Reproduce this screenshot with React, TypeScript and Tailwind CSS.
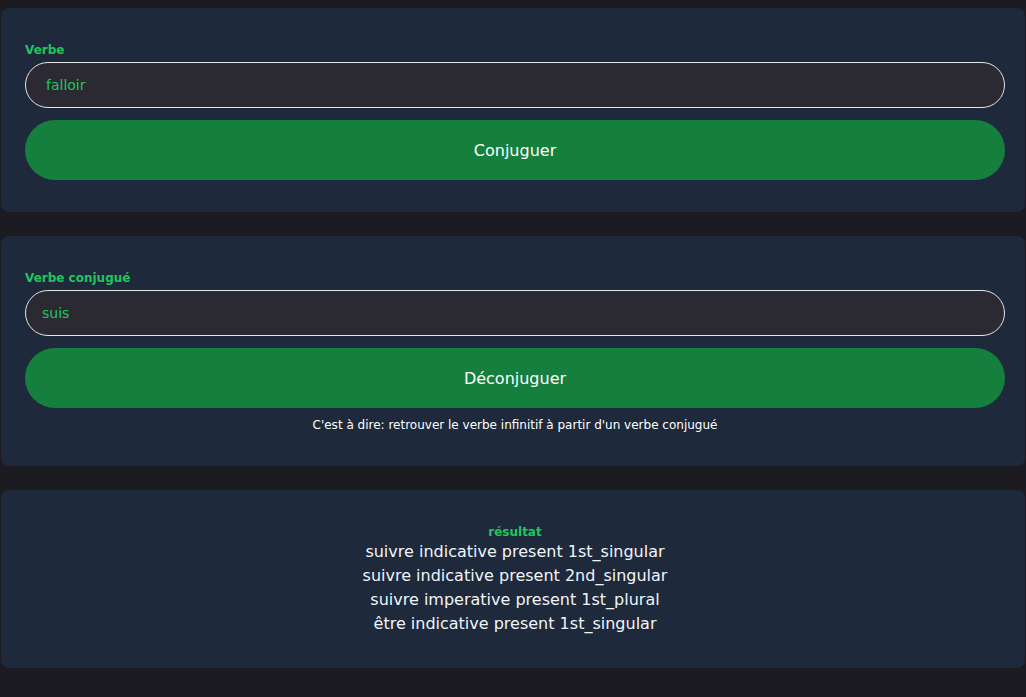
import { useState } from 'react'

const RESULTS = [
  'suivre indicative present 1st_singular',
  'suivre indicative present 2nd_singular',
  'suivre imperative present 1st_plural',
  'être indicative present 1st_singular',
]

function Card({ children, className = '' }: { children: React.ReactNode; className?: string }) {
  return <div className={`rounded-lg bg-[#1e293b] pl-6 pr-5 ${className}`}>{children}</div>
}

export default function App() {
  const [verb, setVerb] = useState('falloir')
  const [conj, setConj] = useState('suis')

  return (
    <div
      className="min-h-[697px] bg-[#1c1b22] px-px pt-2 pb-6 text-white"
      style={{ fontFamily: '"DejaVu Sans", sans-serif' }}
    >
      <div className="flex flex-col gap-6">
        {/* Conjuguer */}
        <Card className="pt-[33px] pb-8">
          <label className="mb-[3px] block text-xs font-bold leading-[18px] text-[#22c55e]">Verbe</label>
          <input
            value={verb}
            onChange={(e) => setVerb(e.target.value)}
            className="h-[46px] w-full rounded-full border border-[#e5e5e5] bg-[#2b2a33] px-5 text-sm text-[#22c55e] outline-none"
          />
          <button className="mt-3 h-[60px] w-full rounded-full bg-[#15803d] pt-0.5 text-base text-white">
            Conjuguer
          </button>
        </Card>

        {/* Déconjuguer */}
        <Card className="pt-[33px] pb-[33px]">
          <label className="mb-[3px] block text-xs font-bold leading-[18px] text-[#22c55e]">Verbe conjugué</label>
          <input
            value={conj}
            onChange={(e) => setConj(e.target.value)}
            className="h-[46px] w-full rounded-full border border-[#e5e5e5] bg-[#2b2a33] px-4 text-sm text-[#22c55e] outline-none"
          />
          <button className="mt-3 h-[60px] w-full rounded-full bg-[#15803d] pt-0.5 text-base text-white">
            Déconjuguer
          </button>
          <p className="mt-[9px] text-center text-xs leading-4 text-white">
            C'est à dire: retrouver le verbe infinitif à partir d'un verbe conjugué
          </p>
        </Card>

        {/* Résultat */}
        <Card className="pt-[34px] pb-8 text-center">
          <div className="text-xs font-bold leading-4 text-[#22c55e]">résultat</div>
          {RESULTS.map((r) => (
            <div key={r} className="text-base leading-6 text-[#f1f5f9]">
              {r}
            </div>
          ))}
        </Card>
      </div>
    </div>
  )
}
